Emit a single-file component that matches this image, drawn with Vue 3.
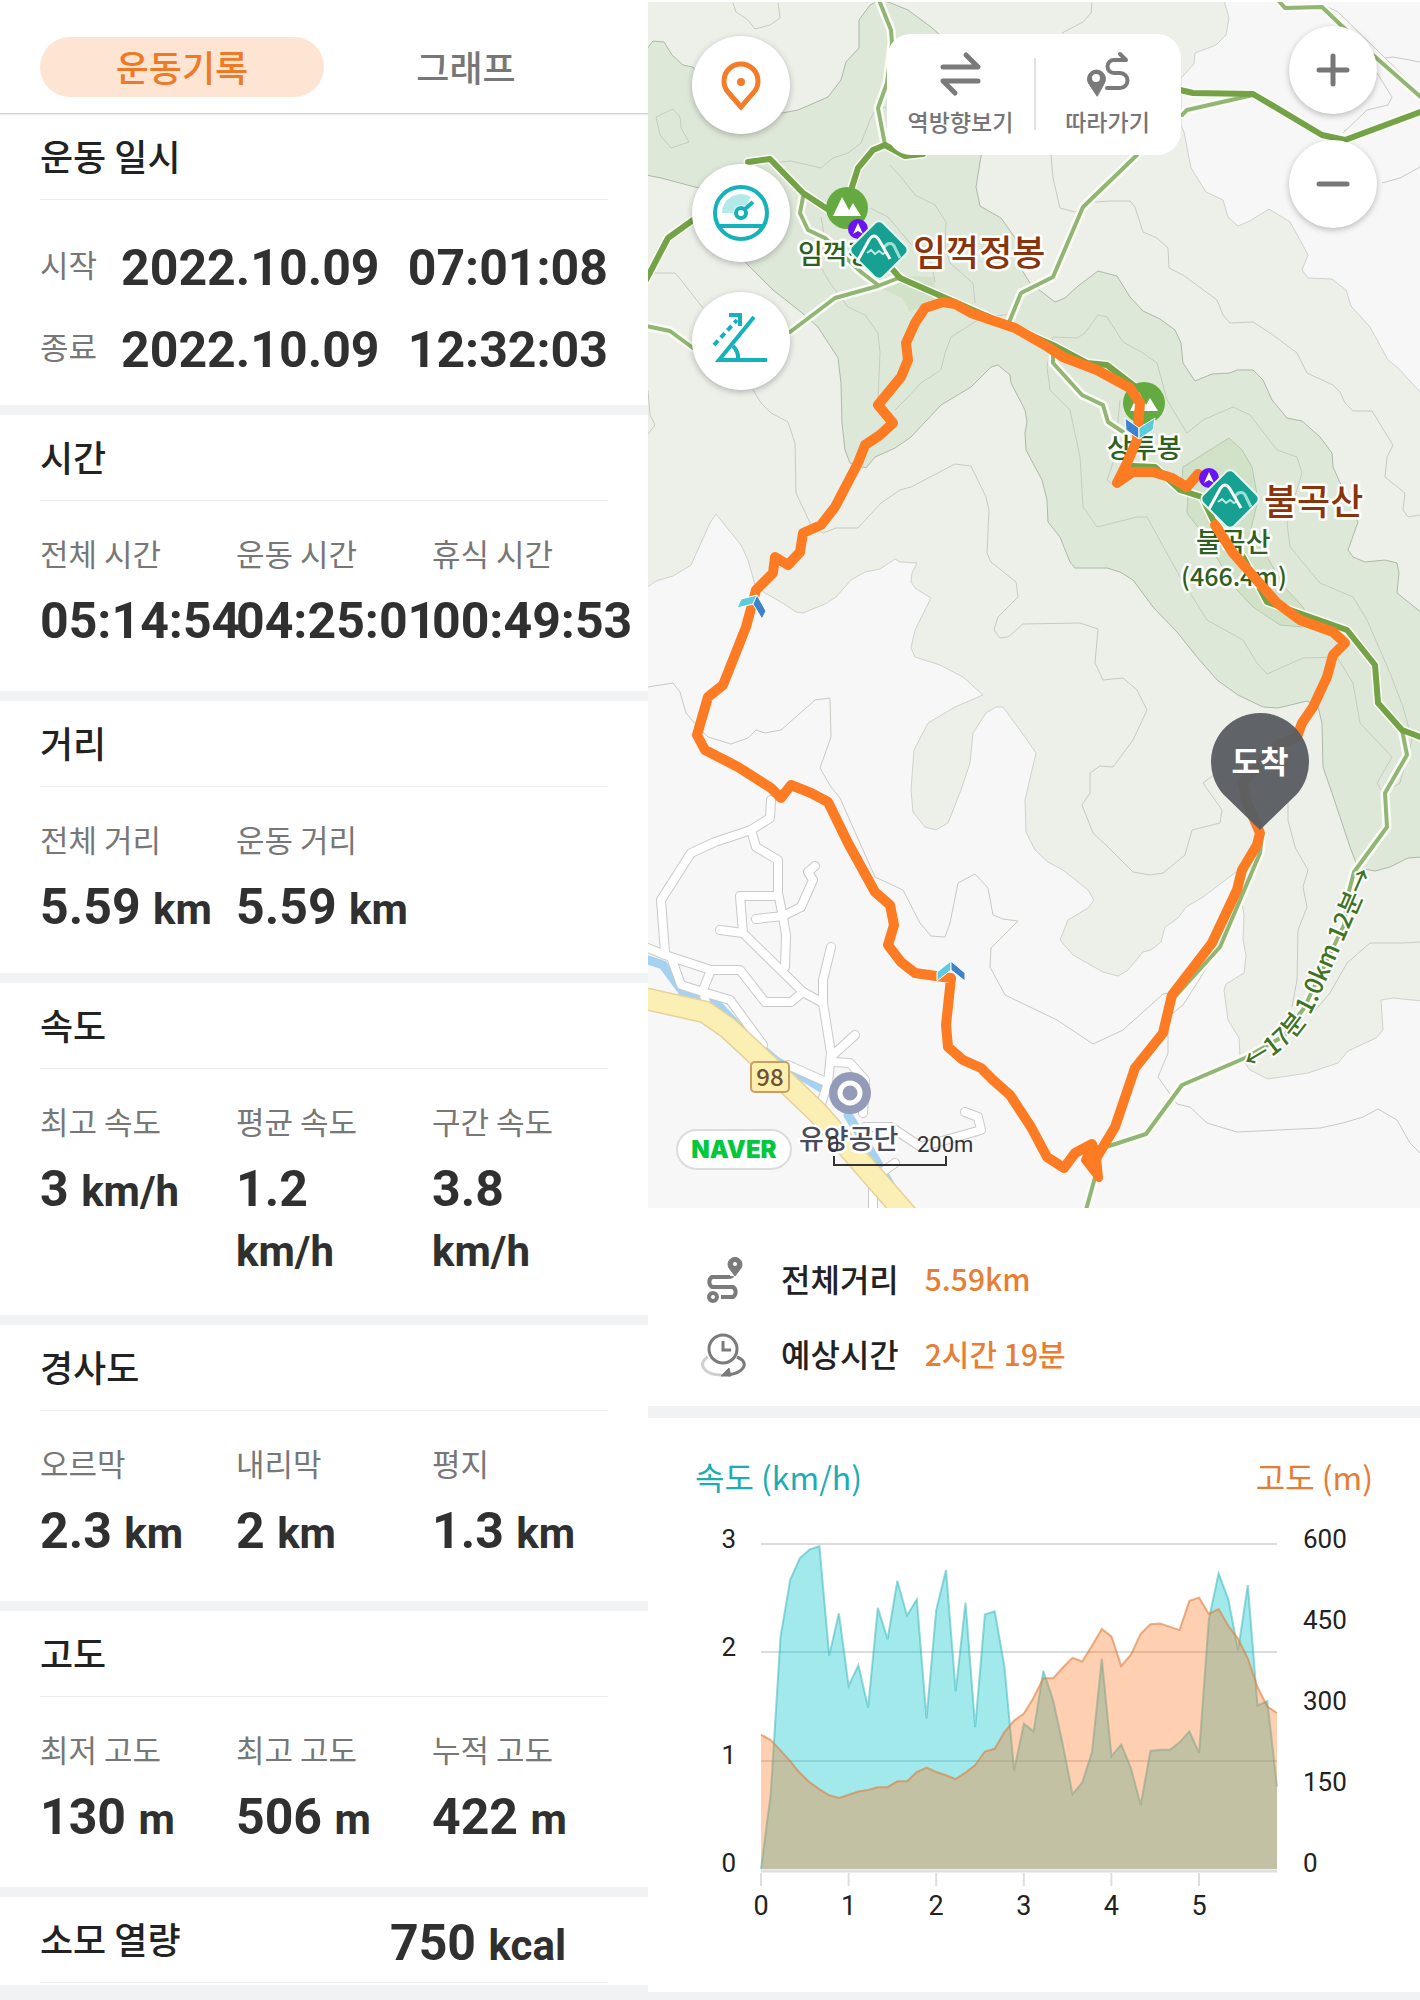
<template>
  <div class="page">
    <section class="record">
      <nav class="tabs">
        <button
          v-for="tab in tabs"
          :key="tab"
          type="button"
          class="tab"
          :class="{ active: tab === currentTab }"
          @click="currentTab = tab"
        >{{ tab }}</button>
      </nav>

      <article class="block">
        <h2>운동 일시</h2>
        <dl class="dates">
          <div v-for="row in dates" :key="row.label" class="date-row">
            <dt>{{ row.label }}</dt>
            <dd><span>{{ row.date }}</span><span>{{ row.time }}</span></dd>
          </div>
        </dl>
      </article>

      <article v-for="block in blocks" :key="block.title" class="block" :class="{ tight: block.tight }">
        <h2>{{ block.title }}</h2>
        <dl class="stats">
          <div v-for="item in block.items" :key="item.label">
            <dt>{{ item.label }}</dt>
            <dd>{{ item.value }} <small v-if="item.unit">{{ item.unit }}</small></dd>
          </div>
        </dl>
      </article>

      <article class="block calorie">
        <h2>소모 열량 <strong>750 <small>kcal</small></strong></h2>
      </article>
    </section>

    <section class="course">
      <div class="map">
        <svg class="map-canvas" viewBox="0 2 772 1206">
          <rect x="0" y="2" width="772" height="1206" fill="#f7f7f7" />
          <!-- 등고선 -->
          <path :d="shape(lowland)" fill="#ecf0e9" stroke="#cfd2cc" />
          <path :d="shape(midland)" fill="#dee8d9" stroke="#adb8a8" />
          <path :d="shape(highland)" fill="#d2e2c9" stroke="#b9c7b1" />
          <path d="M228 286L252 276L287 277L286 300L262 312L254 298Z" fill="#d2e2c9" />
          <path v-for="line, index in contours" :key="'c' + index" :d="trace(line)" class="contour" />

          <!-- 하천, 도로 -->
          <g class="line">
            <path d="M0 960L15 965L35 992L70 1005L100 1037L127 1060L173 1088M200 1115L225 1155L250 1198" stroke="#a5d2f0" stroke-width="9" />
            <path v-for="road, index in roads" :key="'rc' + index" :d="trace(road)" stroke="#c9c9c9" stroke-width="10" />
            <path v-for="road, index in roads" :key="'r' + index" :d="trace(road)" stroke="#fff" stroke-width="8" />
            <path d="M-10 997L57 1012L80 1028L123 1068L170 1113L265 1222" stroke="#e5d19b" stroke-width="23" />
            <path d="M-10 997L57 1012L80 1028L123 1068L170 1113L265 1222" stroke="#fcefb3" stroke-width="20" />
          </g>

          <!-- 등산로 -->
          <g class="line">
            <path v-for="trail, index in [...smallTrails, ...mainTrails]" :key="'h' + index" :d="trace(trail)" stroke="#fbfdf5" stroke-width="9" />
            <path v-for="trail, index in smallTrails" :key="'s' + index" :d="trace(trail)" stroke="#90b574" stroke-width="4" />
            <path v-for="trail, index in mainTrails" :key="'m' + index" :d="trace(trail)" stroke="#74a247" stroke-width="6" />
          </g>

          <g v-for="[x, y] in peaks" :key="'p' + x" :transform="`translate(${x} ${y})`">
            <circle r="21" fill="#64aa40" />
            <path d="M-14 8L-5 -11L2 2L6 -5L14 8Z" fill="#fff" />
          </g>
          <g class="label green">
            <text x="150" y="264">임꺽정봉</text>
            <text x="459" y="458">상투봉</text>
            <text x="548" y="552">불곡산</text>
            <text x="533" y="586" class="height">(466.4m)</text>
          </g>
          <path id="walk" d="M602 1070C640 1050 656 1030 669 1002L727 869" fill="none" />
          <text class="walk"><textPath href="#walk">←17분 1.0km 12분→</textPath></text>

          <g class="label">
            <rect x="103" y="1062" width="38" height="30" rx="4" fill="#feefae" stroke="#c79f62" stroke-width="2" />
            <text x="122" y="1086" class="route-no">98</text>
            <circle cx="202" cy="1093" r="21" fill="#949bb9" />
            <circle cx="202" cy="1093" r="10" fill="none" stroke="#fff" stroke-width="5" />
            <text x="151" y="1149" class="place">유양공단</text>
          </g>
          <text x="179" y="1152" class="scale">0</text>
          <text x="269" y="1152" class="scale">200m</text>
          <path d="M186 1156V1165H298V1156" fill="none" stroke="#333" stroke-width="2" />
          <rect x="29" y="1130" width="114" height="39" rx="20" fill="#fff" stroke="#dcdcdc" stroke-width="2" />
          <text x="86" y="1158" class="naver">NAVER</text>

          <!-- 이동 경로 -->
          <g class="line">
            <path v-for="part, index in route" :key="'t' + index" :d="trace(part)" stroke="#fd7b23" stroke-width="10" />
            <path d="M444 1144L437 1160L451 1178L449 1157Z" fill="#fd7b23" stroke="#fd7b23" stroke-width="8" />
          </g>
          <g stroke="#fff" stroke-width="1">
            <path d="M89 608L93 599L109 595L105 604Z" fill="#5ccbdc" />
            <path d="M109 595L118 611L114 619L105 604Z" fill="#3d83cc" />
            <path d="M289 972L303 961V970L289 981Z" fill="#5ccbdc" />
            <path d="M303 961L317 973V981L303 970Z" fill="#3d83cc" />
            <path d="M477 418L491 428V439L478 430Z" fill="#3d83cc" />
            <path d="M507 418L491 428V439L505 430Z" fill="#5ccbdc" />
          </g>

          <g v-for="mark in summits" :key="mark.name">
            <g :transform="`translate(${mark.x - 21} ${mark.y - 21})`">
              <circle r="10" fill="#6a14f4" />
              <path d="M0 -6L5 5L0 2L-5 5Z" fill="#fff" />
            </g>
            <g :transform="`translate(${mark.x} ${mark.y})`" fill="none">
              <rect x="-22" y="-22" width="44" height="44" rx="6" transform="rotate(45)" fill="#17a192" stroke="#e7f7f4" stroke-width="2" />
              <path d="M5 -2C8 -8 14 -8 16 -2L21 8" stroke="#9be0d6" stroke-width="3" />
              <path d="M-12 3L-8 0L-4 4L0 1L4 4L7 2" stroke="#b9ebe3" stroke-width="2" />
              <path d="M-21 10L-10 -10Q-5 -18 0 -10L11 9" stroke="#fff" stroke-width="3" />
            </g>
            <text :x="mark.x + 34" :y="mark.y + 16" class="summit">{{ mark.name }}</text>
          </g>

          <g>
            <path d="M612 830L575 794A49 49 0 1 1 649 794Z" fill="#5a5e62" opacity="0.96" />
            <text x="612" y="773" class="arrive">도착</text>
          </g>
        </svg>

        <div class="map-tools">
          <button type="button" class="round" aria-label="위치">
            <svg viewBox="0 0 98 98" fill="none">
              <path d="M49 71L36 56A17 17 0 1 1 62 56Z" stroke="#f47b28" stroke-width="5" />
              <circle cx="49" cy="46" r="4" fill="#f47b28" />
            </svg>
          </button>
          <button type="button" class="round" aria-label="속도">
            <svg viewBox="0 0 98 98" fill="none" stroke="#16b2ba">
              <path d="M30 49A19 19 0 0 1 59 33L54 42A9 9 0 0 0 41 49Z" fill="#b5e8e9" stroke="none" />
              <circle cx="49" cy="49" r="26" stroke-width="4" />
              <path d="M25 62H73" stroke-width="4" />
              <circle cx="49" cy="49" r="5" stroke-width="4" />
              <path d="M53 45L61 38" stroke-width="4" />
            </svg>
          </button>
          <button type="button" class="round" aria-label="경사도">
            <svg viewBox="0 0 98 98" fill="none" stroke="#16b2ba" stroke-width="4">
              <path d="M62 25L27 68H75" />
              <path d="M41 54Q47 60 46 68" />
              <path d="M22 53L45 28" stroke-dasharray="6 4" />
              <path d="M37 23H48V34" />
            </svg>
          </button>
        </div>

        <div class="map-menu">
          <button type="button">
            <svg viewBox="0 0 44 46" width="44" height="46" fill="none" stroke="#7a7a7a" stroke-width="5" stroke-linecap="round" stroke-linejoin="round">
              <path d="M27 4L39 16H4M39 30H4L16 42" />
            </svg>
            역방향보기
          </button>
          <button type="button">
            <svg viewBox="0 0 44 46" width="44" height="46" fill="none" stroke="#7a7a7a" stroke-width="4" stroke-linecap="round" stroke-linejoin="round">
              <path d="M34 3L40 9H28A6 6 0 0 0 28 22H34A7 7 0 0 1 34 37H21" />
              <path d="M11 45L3 33A9 9 0 1 1 18 33Z" fill="#7a7a7a" stroke-width="1" />
              <circle cx="10" cy="27" r="4" fill="#fff" stroke="none" />
            </svg>
            따라가기
          </button>
        </div>

        <div class="map-zoom">
          <button type="button" class="round" aria-label="확대">
            <svg viewBox="0 0 88 88"><path d="M44 30V58M30 44H58" class="sign" /></svg>
          </button>
          <button type="button" class="round" aria-label="축소">
            <svg viewBox="0 0 88 88"><path d="M30 44H58" class="sign" /></svg>
          </button>
        </div>
      </div>

      <dl class="summary">
        <div>
          <svg viewBox="0 0 48 48" width="48" height="48" fill="none" stroke="#7b7b7b" stroke-width="4">
            <path d="M33 20C33 20 33 21 29 21H13A6 6 0 0 0 13 31H34A6 6 0 0 1 34 41H22" />
            <circle cx="14" cy="41" r="4" />
            <path d="M36 20L30 12A7 7 0 1 1 42 12Z" fill="#7b7b7b" stroke-width="1" />
            <circle cx="36" cy="8" r="2" fill="#fff" stroke="none" />
          </svg>
          <dt>전체거리</dt>
          <dd>5.59km</dd>
        </div>
        <div>
          <svg viewBox="0 0 48 48" width="48" height="48" fill="none" stroke="#7b7b7b" stroke-width="3">
            <path d="M9 26C-2 32 4 44 23 44" stroke="#cfcfcf" />
            <path d="M38 26C52 32 44 42 29 44" />
            <path d="M22 45L30 37L32 45Z" fill="#7b7b7b" stroke-width="1" />
            <circle cx="24" cy="18" r="14" />
            <path d="M24 10V19H32" />
          </svg>
          <dt>예상시간</dt>
          <dd>2시간 19분</dd>
        </div>
      </dl>

      <div class="chart">
        <div class="chart-title">
          <span class="speed">속도 (km/h)</span>
          <span class="altitude">고도 (m)</span>
        </div>
        <svg viewBox="0 0 772 491">
          <path d="M113 43H629M113 151H629M113 260H629" stroke="#dadcde" stroke-width="2" />
          <path :d="area(speeds, 3)" fill="#04c4c8" fill-opacity="0.37" />
          <path :d="curve(speeds, 3)" fill="none" stroke="#32b4b8" stroke-opacity="0.5" stroke-width="2" />
          <path :d="area(altitudes, 600)" fill="#fc7d2c" fill-opacity="0.37" />
          <path :d="curve(altitudes, 600)" fill="none" stroke="#e07b3c" stroke-opacity="0.6" stroke-width="2" />
          <path d="M113 370H629" stroke="#dcdee0" stroke-width="3" />
          <g v-for="n in 6" :key="n">
            <path :d="`M${113 + (n - 1) * 87.6} 372V385`" stroke="#dcdee0" stroke-width="2" />
            <text :x="113 + (n - 1) * 87.6" y="414" text-anchor="middle" class="tick">{{ n - 1 }}</text>
          </g>
          <text v-for="n in 4" :key="'l' + n" x="88" :y="371 - (n - 1) * 108" text-anchor="end">{{ n - 1 }}</text>
          <text v-for="n in 5" :key="'r' + n" x="655" :y="371 - (n - 1) * 81">{{ (n - 1) * 150 }}</text>
        </svg>
      </div>
    </section>
  </div>
</template>

<script setup>
import { ref } from 'vue'

const tabs = ['운동기록', '그래프']
const currentTab = ref('운동기록')

const dates = [
  { label: '시작', date: '2022.10.09', time: '07:01:08' },
  { label: '종료', date: '2022.10.09', time: '12:32:03' },
]

const blocks = [
  {
    title: '시간',
    items: [
      { label: '전체 시간', value: '05:14:54' },
      { label: '운동 시간', value: '04:25:01' },
      { label: '휴식 시간', value: '00:49:53' },
    ],
  },
  {
    title: '거리',
    tight: true,
    items: [
      { label: '전체 거리', value: '5.59', unit: 'km' },
      { label: '운동 거리', value: '5.59', unit: 'km' },
    ],
  },
  {
    title: '속도',
    tight: true,
    items: [
      { label: '최고 속도', value: '3', unit: 'km/h' },
      { label: '평균 속도', value: '1.2', unit: 'km/h' },
      { label: '구간 속도', value: '3.8', unit: 'km/h' },
    ],
  },
  {
    title: '경사도',
    items: [
      { label: '오르막', value: '2.3', unit: 'km' },
      { label: '내리막', value: '2', unit: 'km' },
      { label: '평지', value: '1.3', unit: 'km' },
    ],
  },
  {
    title: '고도',
    items: [
      { label: '최저 고도', value: '130', unit: 'm' },
      { label: '최고 고도', value: '506', unit: 'm' },
      { label: '누적 고도', value: '422', unit: 'm' },
    ],
  },
]

// 지도 좌표: "x,y x,y ..."
const trace = (points) => 'M' + points.split(' ').join('L')
const shape = (points) => trace(points) + 'Z'

const lowland = '-2,0 576,0 581,18 578,35 568,45 547,53 546,64 533,78 533,125 536,132 543,168 558,192 575,200 580,217 590,226 602,221 621,209 642,222 652,240 660,255 654,270 660,278 684,279 698,290 703,306 722,327 740,360 750,368 774,394 774,1001 745,998 733,1000 735,1030 728,1038 700,1051 690,1063 660,1073 620,1079 602,1070 592,1056 591,1038 580,1020 576,990 578,984 596,973 598,955 595,940 596,915 594,903 588,872 555,897 538,907 530,918 517,927 513,942 503,950 495,952 480,970 470,976 455,972 425,955 412,940 420,920 440,908 446,900 440,890 415,870 400,862 387,850 378,832 377,800 388,753 377,737 355,707 348,707 338,713 325,733 322,763 313,790 300,823 288,830 277,827 265,812 263,790 266,750 280,723 307,707 335,695 315,677 292,665 267,657 263,648 267,630 283,598 267,588 263,582 264,573 269,563 252,562 247,559 232,569 217,572 203,580 188,597 177,604 155,613 148,612 133,602 117,593 107,585 100,560 93,545 68,514 62,523 43,565 25,576 8,581 -2,588'
const midland = '-2,50 5,41 16,42 24,55 35,65 45,67 80,110 134,113 150,110 180,97 193,80 198,62 211,48 211,20 222,5 232,0 240,2 260,10 283,27 300,42 334,150 328,187 332,206 353,218 370,242 372,267 382,283 407,302 417,298 430,286 450,271 469,276 482,297 495,311 512,319 527,330 533,343 535,363 547,381 564,374 582,373 589,370 605,370 615,380 624,400 639,418 654,421 672,437 684,453 685,467 710,522 700,550 705,557 717,562 737,560 749,563 751,573 749,593 774,613 774,857 760,858 742,867 727,871 710,868 702,847 684,793 675,767 674,723 670,707 659,701 630,708 615,707 590,695 569,680 549,657 529,632 505,607 485,580 472,572 459,568 427,568 422,562 412,537 400,522 399,500 394,480 378,450 377,433 379,422 377,410 363,383 362,375 350,365 343,367 323,387 293,405 263,437 247,448 227,457 218,468 202,463 197,450 194,423 193,383 190,358 170,327 153,312 125,290 97,262 51,188 13,178 -2,175'
const highland = '581,438 535,467 534,480 540,490 539,513 552,530 572,563 589,590 605,607 632,625 655,627 660,618 655,607 639,590 619,557 602,533 610,500 604,467 594,450'

const contours = [
  '85,3 88,12 100,20 107,29 122,25 132,18 130,3',
  '8,117 25,109 32,117 33,128 41,142 23,148 12,135 8,117',
  '132,162 143,161 173,168 185,158 200,153 213,143 222,120 228,108 238,107',
  '242,165 253,177 267,195 287,205 298,222 297,247 302,263 325,283 327,303',
  '0,273 27,273 33,280 55,308',
  '173,217 177,240 170,262 182,283 200,307 217,315 230,333 232,353 230,400',
  '370,313 333,318 303,337 297,353 293,370 273,383 257,400 247,410',
  '222,208 240,217 262,243 283,262 287,282',
  '444,3 443,13 435,22 414,33',
  '403,155 405,178 412,208 427,212 435,210',
  '447,202 462,201 482,201 487,207 495,232 509,238 520,248 521,268 535,275 569,300 575,315 582,323 605,322 625,335 649,353 659,373 685,385 692,392 697,403 705,411 724,411 745,445 739,457 737,477 757,493 755,510 760,517 772,515',
  '399,367 405,337 429,338 437,333 450,315 459,317 475,342 495,353 509,363 519,400 539,433 555,420 585,407 602,415 629,450 649,457 654,473 639,523 642,547 672,583 705,597 719,620 742,673 755,707 764,740 752,783 735,793 729,783 744,757 712,723 705,683 689,657 655,658 619,674 609,663 595,640 559,620 532,577 499,517 489,517 449,527 435,507 432,457 422,410 402,390 399,367',
  '472,400 469,430 466,460 459,480 469,488',
  '105,390 113,403 123,413 140,422 147,443 148,493 163,525 175,533 188,528 210,528 233,503 252,490 263,487 307,464 323,466 338,497 341,510 339,553 343,562 368,582 370,597 350,617 346,630 352,638 360,637 375,624 432,623 450,629 447,663 455,680 475,678 489,690 499,710 485,740 465,767 452,766 442,773 442,793 434,805 445,833 460,847 485,872 502,875 515,873 537,855 544,830 572,823 574,810 555,783 572,770',
  '0,687 25,683 32,692 38,713 50,727 60,737 83,744 100,738 108,730 117,733 133,730 167,700 182,698 183,737 172,768 183,787 192,798 207,832 227,877 255,890 272,923 283,936 297,937 302,923 310,883 327,874 340,888 345,915 355,919 370,921 343,948 342,967 357,995 409,1020 445,1044 475,1030 515,994 524,993',
  '572,947 535,1005 520,1017 520,1053 510,1077 529,1104 542,1107 559,1123 589,1132 672,1128 695,1123 715,1117 730,1109 749,1120 762,1143 772,1153',
  '640,800 640,820 647,847 660,870 655,887 659,907 650,930 649,980 644,1007',
  '772,942 755,943 722,943 699,963 682,993 665,1013 650,1013',
  '737,58 745,57 772,62',
  '729,73 744,97 740,105 719,110 695,133',
  '734,183 752,178 772,167',
  '676,5 690,12 772,92',
  '0,390 2,415 7,425 0,434',
]

const roads = [
  '123,800 122,818 103,830 67,842 43,853 13,900 17,953',
  '103,830 108,847 130,860 130,893 135,917 138,935 137,967',
  '130,896 92,896 95,933 155,992 175,1003',
  '72,930 95,933',
  '108,919 135,916 153,907 165,880 160,872 167,866',
  '-5,946 17,955 63,970 92,970 117,1002 143,1002 155,992',
  '23,957 33,985 55,992 82,1000 115,1045',
  '63,970 55,990 58,1003',
  '183,947 175,980 175,1003 183,1053 180,1083 172,1107',
  '207,1035 185,1055',
  '185,1062 202,1063 217,1080 215,1113',
  '140,1065 178,1082',
  '217,1127 243,1127 273,1147 333,1130 330,1117 317,1112',
  '247,1163 233,1173',
  '225,1188 225,1220',
]

const smallTrails = [
  '231,0 243,30 244,43 239,83 230,108 237,145',
  '155,197 152,213 160,230 177,238 213,272 230,285',
  '142,332 187,298 230,286 253,277',
  '-2,326 22,331 45,348',
  '362,320 373,293 405,277 435,207 489,155',
  '405,350 405,363 434,395 455,405 460,422 475,432',
  '754,730 759,755 737,793 739,827 706,872 700,895 696,925 672,975 656,1008 636,1036 597,1058 534,1085 498,1134 455,1148',
  '614,835 612,853 572,947 524,1000',
  '449,1170 438,1210',
  '534,115 539,110 605,95',
  '630,0 637,8 674,7 695,27 725,55 775,99',
]
const mainTrails = [
  '100,162 122,159 155,193 199,222',
  '204,187 210,168 225,150 237,145 257,156 275,154',
  '-2,280 20,238 45,220',
  '245,270 252,278 405,345 439,363 459,365 489,388',
  '485,466 507,467 532,490 554,497 565,520 595,557 619,602 699,630 727,665 730,703 754,730 775,738',
  '532,90 545,93 605,94 674,135 697,140 775,111',
]

const route = [
  '550,474 539,487 524,478 505,472 485,472 469,483 479,463 489,440 490,427 492,403 482,388 449,370 415,357 400,347 367,328 323,313 307,304 295,302 277,308 267,323 258,343 260,360 253,377 230,405 245,423 232,435 217,445 210,463 187,507 173,525 155,533 152,552 140,565 127,557 125,573 108,590 98,627 75,685 60,697 49,735 57,750 90,767 123,788 133,798 143,785 163,793 180,802 200,843 227,892 242,905 246,925 240,945 253,962 267,973 288,976 303,978 298,1025 300,1047 315,1060 333,1068 345,1080 362,1095 383,1127 399,1157 416,1168 427,1153 444,1144 449,1157 467,1127 487,1068 515,1033 524,995 564,943 589,890 594,870 609,845 612,833 599,803 594,783 630,745 649,737 654,723 665,707 679,677 685,655 697,643 685,632 652,620 629,603 585,553 567,525',
]

const peaks = [[199, 208], [496, 403]]
const summits = [
  { name: '임꺽정봉', x: 231, y: 250 },
  { name: '불곡산', x: 582, y: 499 },
]

const speeds = [
  0, 0.69, 2.14, 2.67, 2.87, 2.95, 2.98, 1.97, 2.36, 1.69, 1.88, 1.49, 2.41, 2.12, 2.66, 2.34, 2.49, 1.39,
  2.39, 2.76, 1.64, 2.46, 1.31, 2.35, 2.38, 1.87, 0.91, 1.34, 1.27, 1.83, 1.56, 1.15, 0.69, 0.8, 1.08, 1.94,
  1.04, 1.15, 0.93, 0.59, 1.09, 1.1, 1.1, 1.17, 1.27, 1.07, 2.3, 2.73, 2.49, 2.02, 2.62, 1.51, 1.55, 0.76,
]
const altitudes = [
  248, 238, 219, 199, 177, 160, 147, 136, 131, 137, 143, 146, 151, 151, 162, 162, 179, 187,
  179, 173, 166, 178, 192, 217, 222, 253, 274, 287, 316, 352, 352, 372, 390, 383, 412, 443,
  429, 375, 396, 434, 452, 453, 447, 441, 495, 501, 471, 480, 449, 425, 389, 336, 300, 288,
]

const curve = (values, max) => 'M' + values
  .map((value, i) => `${(113 + (i * 516) / (values.length - 1)).toFixed(1)},${(368 - (value / max) * 325).toFixed(1)}`)
  .join('L')
const area = (values, max) => curve(values, max) + 'L629,368L113,368Z'
</script>

<style>
body {
  margin: 0;
  background: #fff;
}
</style>

<style scoped>
.page {
  display: grid;
  grid-template-columns: 648fr 772fr;
  font-family: "Noto Sans CJK KR", "Noto Sans", sans-serif;
  color: #222;
}

.record, .course {
  min-width: 0;
}

.record {
  display: flex;
  flex-direction: column;
}

h2, dl, dd {
  margin: 0;
}

button {
  padding: 0;
  border: 0;
  background: none;
  font-family: inherit;
  cursor: pointer;
}

.tabs {
  display: flex;
  padding: 37px 40px 16px;
  border-bottom: 1px solid #d2d2d4;
  box-shadow: 0 1px 1px #ececec;
}

.tab {
  flex: 1;
  height: 60px;
  padding-bottom: 2px;
  border-radius: 30px;
  font-size: 36px;
  font-weight: 500;
  line-height: 58px;
  color: #777;
}

.tab.active {
  background: #fee5d3;
  color: #ee7a28;
}

.block {
  padding: 0 40px 40px;
  border-bottom: 10px solid #f1f2f4;
}

.block.tight {
  padding-bottom: 36px;
}

h2 {
  padding-bottom: 3px;
  border-bottom: 1px solid #ededef;
  font-size: 36px;
  font-weight: 500;
  line-height: 82px;
}

dt {
  font-size: 31px;
  line-height: 40px;
  color: #777;
}

dd, strong {
  font-family: Roboto, "Noto Sans CJK KR", sans-serif;
  font-size: 50px;
  font-weight: 700;
  line-height: 60px;
  color: #303030;
}

small {
  font-size: 42px;
  line-height: 1;
}

.block:has(.dates) {
  padding-bottom: 15px;
}

.dates {
  padding-top: 26px;
}

.date-row {
  display: flex;
  align-items: center;
  height: 82px;
}

.date-row dt {
  padding-bottom: 6px;
}

.date-row dd {
  display: flex;
  flex: 1;
  justify-content: space-between;
  margin-left: 24px;
  padding-top: 2px;
}

.stats {
  display: grid;
  grid-template-columns: repeat(3, 1fr);
  margin-right: -20px;
  padding-top: 32px;
}

.stats > div {
  min-width: 0;
  padding-right: 20px;
}

.stats dd {
  margin-top: 18px;
}

.calorie {
  flex: 1;
  padding-bottom: 0;
  border-bottom-width: 15px;
}

.calorie h2 {
  display: flex;
  align-items: flex-end;
  justify-content: space-between;
  padding-right: 42px;
}

.calorie strong {
  line-height: 72px;
}

.course {
  padding-top: 2px;
  background: #fff;
}

.map {
  position: relative;
}

.map-canvas, .chart svg {
  display: block;
  width: 100%;
}

.contour {
  fill: none;
  stroke: #c6cbc2;
}

.line {
  fill: none;
  stroke-linecap: round;
  stroke-linejoin: round;
}

.label text, .summit, .walk {
  paint-order: stroke;
  stroke: #fff;
  stroke-width: 5px;
  stroke-linejoin: round;
}

.green {
  fill: #2d5f1e;
  font-size: 27px;
  font-weight: 500;
}

.height {
  font-size: 25px;
}

.summit {
  fill: #8b330b;
  font-size: 36px;
  font-weight: 500;
}

.walk {
  fill: #40731f;
  font-size: 25px;
  font-weight: 500;
  stroke-width: 4px;
}

.label .route-no {
  fill: #6c5232;
  font-size: 24px;
  font-weight: 500;
  text-anchor: middle;
  stroke: none;
}

.place {
  fill: #494b5b;
  font-size: 27px;
  font-weight: 500;
}

.scale {
  fill: #333;
  font-family: Roboto, sans-serif;
  font-size: 22px;
}

.naver {
  fill: #03c73c;
  font-family: Inter, sans-serif;
  font-size: 24px;
  font-weight: 900;
  text-anchor: middle;
}

.arrive {
  fill: #fff;
  font-size: 31px;
  font-weight: 700;
  text-anchor: middle;
}

.map-tools, .map-zoom {
  position: absolute;
  display: flex;
  flex-direction: column;
}

.map-tools {
  top: 34px;
  left: 44px;
  gap: 30px;
}

.map-zoom {
  top: 24px;
  right: 43px;
  gap: 26px;
}

.round {
  width: 98px;
  height: 98px;
  border-radius: 50%;
  background: #fff;
  box-shadow: 0 2px 6px rgba(0, 0, 0, 0.25);
}

.map-zoom .round {
  width: 88px;
  height: 88px;
}

.round svg {
  display: block;
}

.sign {
  stroke: #777;
  stroke-width: 5;
  stroke-linecap: round;
}

.map-menu {
  position: absolute;
  top: 32px;
  left: 50%;
  display: flex;
  width: 294px;
  height: 121px;
  border-radius: 24px;
  background: #fff;
  transform: translateX(-50%);
}

.map-menu button {
  display: flex;
  flex: 1;
  flex-direction: column;
  align-items: center;
  gap: 6px;
  padding-top: 17px;
  font-size: 23px;
  font-weight: 500;
  line-height: 36px;
  color: #757575;
}

.map-menu button + button::before {
  content: '';
  position: absolute;
  top: 24px;
  left: 50%;
  height: 72px;
  border-left: 2px solid #e0e0e0;
}

.summary {
  padding: 34px 51px 14px;
  border-bottom: 12px solid #f1f2f4;
}

.summary > div {
  display: flex;
  align-items: center;
  height: 75px;
}

.summary dt {
  margin: 0 26px 0 34px;
  padding-bottom: 4px;
  font-size: 32px;
  font-weight: 500;
  color: #222;
}

.summary dd {
  padding-bottom: 4px;
  font-family: inherit;
  font-size: 30px;
  font-weight: 500;
  line-height: 40px;
  color: #e87e33;
}

.chart {
  padding-top: 34px;
  border-bottom: 8px solid #f1f2f4;
}

.chart-title {
  display: flex;
  justify-content: space-between;
  padding: 0 47px 1px;
  font-size: 32px;
  line-height: 48px;
}

.speed {
  color: #1cacb3;
}

.altitude {
  color: #e57c33;
}

.chart text {
  fill: #222;
  font-family: Roboto, sans-serif;
  font-size: 26px;
}

.chart .tick {
  font-size: 27px;
}
</style>
